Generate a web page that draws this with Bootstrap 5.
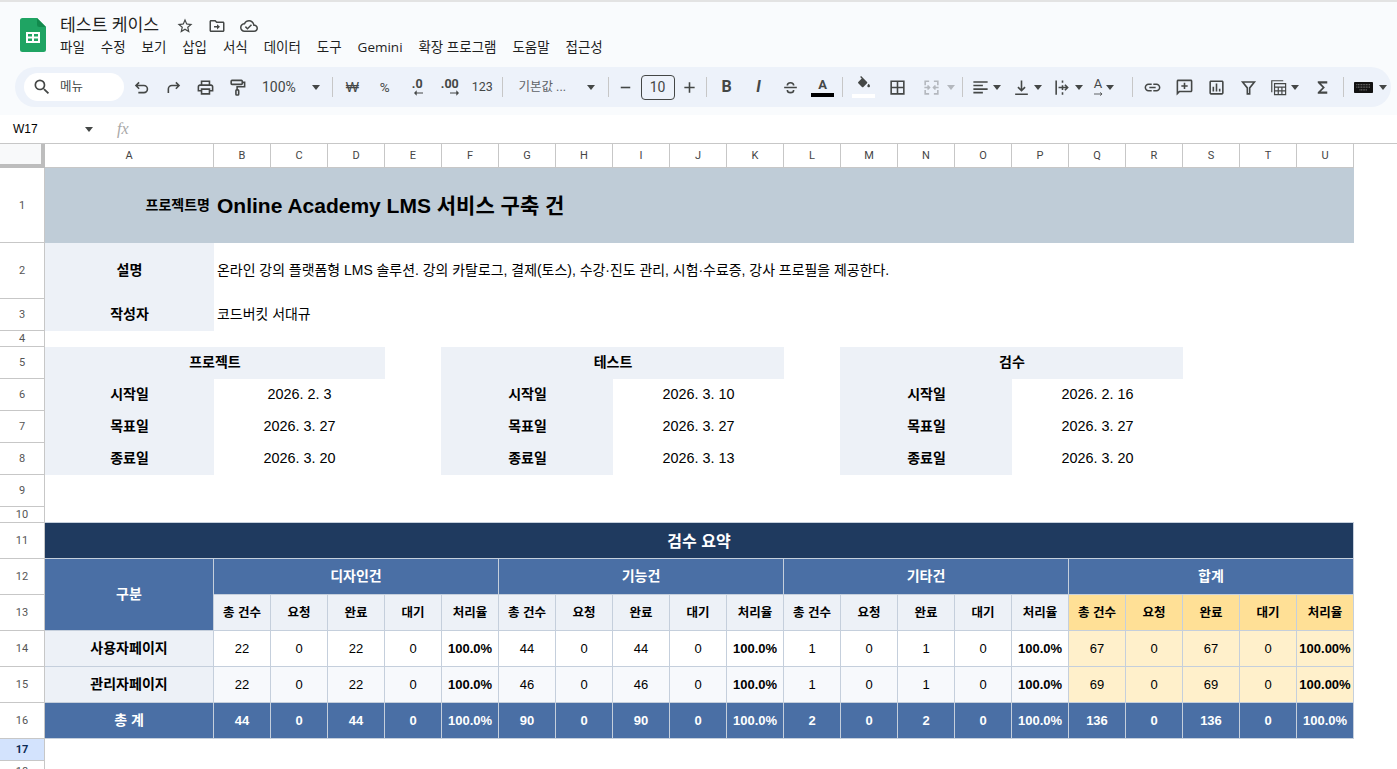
<!DOCTYPE html>
<html lang="ko">
<head>
    <meta charset="UTF-8">
    <meta name="viewport" content="width=device-width, initial-scale=1.0">
    <title>테스트 케이스</title>
    <link href="https://cdn.jsdelivr.net/npm/bootstrap@5.3.0/dist/css/bootstrap.min.css" rel="stylesheet">
    <style>
        html, body { height: 100%; overflow: hidden; }
        body { background: #fff; color: #000; font-family: "Liberation Sans", "Noto Sans CJK KR", sans-serif; }

        /* 상단 영역 */
        .app-top { height: 115px; background: #f9fbfd; border-top: 2px solid #e3e3e3; font-family: Roboto, "Noto Sans CJK KR", sans-serif; color: #1f1f1f; }
        .title-row { height: 65px; padding-left: 20px; }
        .doc-logo { flex: none; width: 26px; height: 34px; margin-top: 16px; }
        .doc-info { margin-left: 14px; padding-top: 11px; }
        .doc-name { font-size: 17.2px; line-height: 24px; width: 109px; }
        .doc-icon { width: 32px; text-align: center; }
        .doc-icon svg { width: 18px; height: 18px; fill: #444746; }
        .menu-list { font-family: "Open Sans", "Noto Sans CJK KR", sans-serif; font-size: 13.5px; line-height: 18px; margin-top: 1px; gap: 15.9px; }

        .tool-pill { height: 40px; margin: 0 6px 0 15px; padding-left: 9px; background: #edf2fa; border-radius: 20px; color: #444746; font-size: 13px; }
        .menu-search { flex: none; width: 100px; height: 28px; background: #fff; border-radius: 14px; padding-left: 8px; margin-right: 1px; gap: 8px; font-size: 12.5px; }
        .menu-search svg { width: 20px; height: 20px; fill: #444746; }
        .tb { width: 32px; height: 28px; flex: none; display: flex; align-items: center; justify-content: center; }
        .tb svg { flex: none; width: 19px; height: 19px; fill: #444746; }
        .tb-line svg { fill: none; stroke: #444746; stroke-width: 2; }
        .tb-n { width: 32.5px; font-size: 12.5px; }
        .tb-cur { font-family: "Liberation Sans", sans-serif; font-size: 14px; }
        .tb-pct { font-size: 13.5px; }
        .tb-step { width: 26px; }
        .tb-w { width: 34px; }
        .tb-drop { width: 41px; justify-content: flex-start; padding-left: 4px; }
        .tb-drop .arrow-down { margin-left: 3px; }
        .tb-drop-last { width: 39px; }
        .tb-kbd { width: 43px; padding-left: 6.5px; }
        .tb-kbd .arrow-down { margin-left: 6px; }
        .tb-merge { width: 44px; justify-content: flex-start; padding-left: 7px; }
        .tb-merge .arrow-down { margin-left: 6px; }
        .tb-select { justify-content: space-between; font-size: 14px; }
        .sel-zoom { width: 75px; padding: 0 8px 0 9px; }
        .sel-font { width: 98px; padding: 0 10px 0 12px; font-size: 12.5px; color: #5f6368; }
        .arrow-down { flex: none; width: 0; height: 0; border-left: 4.5px solid transparent; border-right: 4.5px solid transparent; border-top: 5px solid #444746; }
        .tb-sep { flex: none; width: 1px; height: 20px; background: #c7c7c7; margin: 0 3.5px; }
        .size-box { width: 34px; height: 25px; margin: 0 2px; border: 1px solid #444746; border-radius: 4px; font-size: 14px; text-align: center; line-height: 23px; flex: none; }
        .stack-glyph { display: flex; flex-direction: column; align-items: center; line-height: 1; font-weight: 700; }
        .stack-dec { align-items: flex-end; }
        .letter-a { font-size: 13px; line-height: 14px; }
        .color-bar { width: 23px; height: 4px; background: #000; margin-top: 1px; }
        .color-bar-white { background: #fff; margin-top: 2px; }
        .tb .small-arrow { width: 9px; height: 6px; }
        .tb .fill-icon { width: 16px; height: 16px; }
        .muted-icon svg { stroke: #b4b8be; }
        .muted-icon .arrow-down { border-top-color: #b4b8be; }

        /* 수식 입력줄 */
        .formula-bar { height: 29px; border-bottom: 1px solid #c7c7c7; padding-left: 13px; font-size: 12px; }
        .name-box { width: 80px; }
        .fx-mark { margin-left: 24px; width: 20px; font: italic 16px "Liberation Serif", serif; color: #a8a8a8; }

        /* 시트 */
        .sheet-grid { width: 1397px; table-layout: fixed; border-collapse: separate; border-spacing: 0; font-size: 14px; }
        .sheet-grid td, .sheet-grid th { padding: 0; white-space: nowrap; vertical-align: middle; }
        .col-rh { width: 45px; }
        .col-a { width: 169px; }
        .col-n { width: 57px; }
        .col-end { width: 43px; }
        .sheet-grid .col-head { font: 400 11px Roboto, sans-serif; color: #444; text-align: center; background: #fff; border-right: 1px solid #c7c7c7; border-bottom: 1px solid #c7c7c7; }
        .sheet-grid .col-corner { background: #f8f9fa; border-right: 4px solid #bdbdbd; border-bottom: 4px solid #bdbdbd; }
        .sheet-grid .col-tail { background: #fff; }
        .sheet-grid .rh { font: 400 11px Roboto, sans-serif; color: #555; text-align: center; background: #fff; border-right: 1px solid #c7c7c7; border-bottom: 1px solid #c7c7c7; }
        .sheet-grid .rh-on { background: #d3e3fd; font-weight: 700; color: #0b2a55; }

        .rw-head { height: 24px; }
        .rw-75 { height: 75px; }
        .rw-56 { height: 56px; }
        .rw-32 { height: 32px; }
        .rw-16 { height: 16px; }
        .rw-36 { height: 36px; }
        .rw-22 { height: 22px; }

        .sheet-grid .fill-slate { background: #bfccd7; }
        .sheet-grid .fill-pale { background: #edf1f7; }
        .sheet-grid .fill-over { box-shadow: -1px 0 0 #edf1f7; }
        .sheet-grid .label-cell { font-weight: 700; text-align: center; font-size: 14px; padding-bottom: 2px; }
        .sheet-grid .project-label { text-align: right; padding-right: 4px; font-weight: 700; font-size: 14px; }
        .sheet-grid .project-name { padding-left: 3px; font-weight: 700; font-size: 21px; }
        .sheet-grid .text-cell { padding: 0 0 2px 3px; font-size: 13.95px; }
        .sheet-grid .date-cell { text-align: center; font-size: 14.4px; }

        .sum-row td { border-right: 1px solid #c5cfdc; border-bottom: 1px solid #c5cfdc; text-align: center; font-size: 13px; }
        .sheet-grid .sum-edge { border-bottom: 1px solid #c5cfdc; }
        .sheet-grid .sum-row .fill-navy { background: #1f3a5f; color: #fff; font-weight: 700; font-size: 16px; padding-top: 2px; }
        .sum-row .fill-blue { background: #4a6fa5; color: #fff; font-weight: 700; }
        .sum-row .group-head { font-size: 14px; }
        .sheet-grid .sum-row .fill-sub { background: #edf1f7; font-weight: 700; font-size: 12.5px; padding-top: 2px; }
        .sheet-grid .sum-row .fill-gold { background: #ffe096; font-weight: 700; font-size: 12.5px; padding-top: 2px; }
        .sum-row .fill-cream { background: #fff0cb; }
        .sum-row .fill-alt { background: #f7f9fc; }
        .sheet-grid .sum-row .row-title { background: #edf1f7; font-weight: 700; font-size: 14px; }
        .sum-row .sum-title { font-size: 14px; }
        .sum-row .rate { font-weight: 700; font-size: 13px; }
        .sheet-grid .sum-row .rh { border-right: 1px solid #c7c7c7; border-bottom: 1px solid #c7c7c7; font-size: 11px; }
    </style>
</head>
<body>
    <div class="app-top">
        <div class="title-row d-flex">
            <svg class="doc-logo" viewBox="0 0 26 34">
                <path d="M2.500 0H17l9 9v22.500a2.500 2.500 0 0 1-2.500 2.500h-21A2.500 2.500 0 0 1 0 31.500v-29A2.500 2.500 0 0 1 2.500 0z" fill="#1fa463"/>
                <path d="M17 0l9 9h-6.500A2.500 2.500 0 0 1 17 6.500z" fill="#128a4d"/>
                <path d="M6 14h14v11H6z" fill="#fff"/>
                <path d="M8 16h4v2.500H8zM14 16h4v2.500h-4zM8 20.500h4V23H8zM14 20.500h4V23h-4z" fill="#1fa463"/>
            </svg>
            <div class="doc-info">
                <div class="d-flex align-items-center">
                    <div class="doc-name">테스트 케이스</div>
                    <div class="doc-icon"><svg viewBox="0 0 24 24"><path d="M22 9.240l-7.190-.620L12 2 9.190 8.630 2 9.240l5.460 4.730L5.820 21 12 17.270 18.180 21l-1.630-7.030L22 9.240zM12 15.400l-3.760 2.270 1-4.280-3.320-2.880 4.380-.380L12 6.100l1.710 4.040 4.380.380-3.320 2.880 1 4.280L12 15.400z"/></svg></div>
                    <div class="doc-icon"><svg viewBox="0 0 24 24"><path d="M20 6h-8l-2-2H4c-1.100 0-2 .9-2 2v12c0 1.100.9 2 2 2h16c1.100 0 2-.9 2-2V8c0-1.100-.9-2-2-2zm0 12H4V6h5.170l2 2H20v10z"/><path d="M8 12h4V9.500l4 3.500-4 3.500V14H8z"/></svg></div>
                    <div class="doc-icon"><svg viewBox="0 0 24 24"><path d="M19.350 10.040C18.670 6.590 15.640 4 12 4 9.110 4 6.600 5.640 5.350 8.040 2.340 8.360 0 10.910 0 14c0 3.310 2.690 6 6 6h13c2.760 0 5-2.240 5-5 0-2.640-2.050-4.780-4.650-4.960zM19 18H6c-2.210 0-4-1.790-4-4 0-2.050 1.530-3.760 3.560-3.970l1.070-.110.500-.950C8.080 7.140 9.940 6 12 6c2.620 0 4.880 1.860 5.390 4.430l.300 1.500 1.530.110c1.560.100 2.780 1.410 2.780 2.960 0 1.650-1.350 3-3 3zm-9-3.820l-2.090-2.090L6.500 13.500 10 17l6.010-6.010-1.410-1.410z"/></svg></div>
                </div>
                <div class="menu-list d-flex">
                    <span>파일</span><span>수정</span><span>보기</span><span>삽입</span><span>서식</span><span>데이터</span><span>도구</span><span>Gemini</span><span>확장 프로그램</span><span>도움말</span><span>접근성</span>
                </div>
            </div>
        </div>

        <div class="tool-pill d-flex align-items-center">
            <div class="menu-search d-flex align-items-center">
                <svg viewBox="0 0 24 24"><path d="M15.500 14h-.79l-.28-.27A6.471 6.471 0 0 0 16 9.500 6.500 6.500 0 1 0 9.500 16c1.610 0 3.090-.59 4.230-1.570l.27.280v.79l5 4.990L20.490 19l-4.990-5zm-6 0C7.010 14 5 11.990 5 9.500S7.010 5 9.500 5 14 7.010 14 9.500 11.990 14 9.500 14z"/></svg>
                <span>메뉴</span>
            </div>
            <div class="tb tb-line"><svg viewBox="0 0 24 24"><path d="M9 5.500L5 9.500l4 4M5.500 9.500H15a4.500 4.500 0 0 1 0 9H8"/></svg></div>
            <div class="tb tb-line"><svg viewBox="0 0 24 24"><path d="M15 5.500l4 4-4 4M18.500 9.500H10a4.500 4.500 0 0 0-4.500 4.500V19"/></svg></div>
            <div class="tb"><svg viewBox="0 0 24 24"><path d="M19 8h-1V3H6v5H5c-1.660 0-3 1.340-3 3v6h4v4h12v-4h4v-6c0-1.660-1.340-3-3-3zM8 5h8v3H8V5zm8 12v2H8v-4h8v2zm2-2v-2H6v2H4v-4c0-.55.45-1 1-1h14c.55 0 1 .45 1 1v4h-2z"/></svg></div>
            <div class="tb tb-line"><svg viewBox="0 0 24 24"><rect x="4" y="3" width="14" height="5" rx="1"/><path d="M18 5.500h3V11H11.500v3.500"/><rect x="10" y="15" width="3.500" height="6.500" rx="1"/></svg></div>
            <div class="tb tb-select sel-zoom"><span>100%</span><span class="arrow-down"></span></div>
            <div class="tb-sep"></div>
            <div class="tb tb-n tb-cur">₩</div>
            <div class="tb tb-n tb-pct">%</div>
            <div class="tb tb-n"><div class="stack-glyph stack-dec"><span>.0</span><svg class="small-arrow" viewBox="0 0 10 6"><path d="M10 2.500H3V0L0 3l3 3V3.500h7z"/></svg></div></div>
            <div class="tb tb-n"><div class="stack-glyph stack-dec"><span>.00</span><svg class="small-arrow" viewBox="0 0 10 6"><path d="M0 2.500h7V0l3 3-3 3V3.500H0z"/></svg></div></div>
            <div class="tb tb-n">123</div>
            <div class="tb-sep"></div>
            <div class="tb tb-select sel-font"><span>기본값 ...</span><span class="arrow-down"></span></div>
            <div class="tb-sep"></div>
            <div class="tb tb-step tb-line"><svg viewBox="0 0 24 24"><path d="M6 12h12"/></svg></div>
            <div class="size-box">10</div>
            <div class="tb tb-step tb-line"><svg viewBox="0 0 24 24"><path d="M5.500 12h13M12 5.500v13"/></svg></div>
            <div class="tb-sep"></div>
            <div class="tb fw-bold fs-6">B</div>
            <div class="tb fw-bold fst-italic fs-6">I</div>
            <div class="tb tb-line"><svg viewBox="0 0 24 24"><path d="M8 9.500a4 3.500 0 0 1 8 0M4 12h16M8 15a4 3.500 0 0 0 8 0"/></svg></div>
            <div class="tb"><div class="stack-glyph"><span class="letter-a">A</span><span class="color-bar"></span></div></div>
            <div class="tb-sep"></div>
            <div class="tb tb-w"><div class="stack-glyph"><svg class="fill-icon" viewBox="0 0 24 24"><path d="M16.560 8.940L7.620 0 6.210 1.410l2.380 2.380-5.150 5.150c-.59.590-.59 1.540 0 2.120l5.500 5.500c.29.290.68.440 1.060.440s.77-.15 1.060-.44l5.500-5.500c.59-.58.59-1.530 0-2.120zM19 11.500s-2 2.170-2 3.500c0 1.100.9 2 2 2s2-.9 2-2c0-1.330-2-3.500-2-3.500z"/></svg><span class="color-bar color-bar-white"></span></div></div>
            <div class="tb tb-w tb-line"><svg viewBox="0 0 24 24"><path d="M4 4h16v16H4zM12 4v16M4 12h16"/></svg></div>
            <div class="tb tb-merge muted-icon tb-line"><svg viewBox="0 0 24 24"><path d="M4 9V4h5M15 4h5v5M4 15v5h5M15 20h5v-5M3 12h6M21 12h-6M7 9.500l2.500 2.500L7 14.500M17 9.500L14.500 12l2.500 2.500"/></svg><span class="arrow-down"></span></div>
            <div class="tb-sep"></div>
            <div class="tb tb-drop tb-line"><svg viewBox="0 0 24 24"><path d="M3 5h18M3 9.500h12M3 14h18M3 18.500h12"/></svg><span class="arrow-down"></span></div>
            <div class="tb tb-drop tb-line"><svg viewBox="0 0 24 24"><path d="M4 20.500h16M12 3v13M7.500 11.500L12 16l4.500-4.500"/></svg><span class="arrow-down"></span></div>
            <div class="tb tb-drop tb-line"><svg viewBox="0 0 24 24"><path d="M4 3v18M12 3v3M12 9v6M12 18v3M7 12h11M15 8.500l3.500 3.500-3.500 3.500"/></svg><span class="arrow-down"></span></div>
            <div class="tb tb-drop tb-drop-last tb-line"><div class="stack-glyph"><span class="letter-a fw-normal">A</span><svg class="small-arrow" viewBox="0 0 14 6"><path d="M0 3h12M9.500.5L12.500 3l-3 2.500" stroke-width="1.300"/></svg></div><span class="arrow-down"></span></div>
            <div class="tb-sep"></div>
            <div class="tb"><svg viewBox="0 0 24 24"><path d="M3.900 12c0-1.710 1.390-3.100 3.100-3.100h4V7H7c-2.760 0-5 2.240-5 5s2.240 5 5 5h4v-1.900H7c-1.710 0-3.100-1.390-3.100-3.100zM8 13h8v-2H8v2zm9-6h-4v1.900h4c1.710 0 3.100 1.390 3.100 3.100s-1.390 3.100-3.100 3.100h-4V17h4c2.760 0 5-2.240 5-5s-2.240-5-5-5z"/></svg></div>
            <div class="tb"><svg viewBox="0 0 24 24"><path d="M20 2H4c-1.100 0-2 .9-2 2v18l4-4h14c1.100 0 2-.9 2-2V4c0-1.100-.9-2-2-2zm0 14H5.170L4 17.170V4h16v12z"/><path d="M11 6h2v3h3v2h-3v3h-2v-3H8V9h3z"/></svg></div>
            <div class="tb"><svg viewBox="0 0 24 24"><path d="M19 3H5c-1.100 0-2 .9-2 2v14c0 1.100.9 2 2 2h14c1.100 0 2-.9 2-2V5c0-1.100-.9-2-2-2zm0 16H5V5h14v14z"/><path d="M7 11h2v6H7zM11 7h2v10h-2zM15 13.500h2V17h-2z"/></svg></div>
            <div class="tb tb-line"><svg viewBox="0 0 24 24"><path d="M4.500 5h15l-6 7.500V20h-3v-7.500z"/></svg></div>
            <div class="tb tb-drop tb-line"><svg viewBox="0 0 24 24"><path d="M3.500 18V3.500H18" stroke-width="1.500"/><path d="M7 7h14v14H7zM7 11.500h14M7 16.300h14M11.700 11.500V21M16.300 11.500V21" stroke-width="1.500"/></svg><span class="arrow-down"></span></div>
            <div class="tb tb-w"><svg viewBox="0 0 24 24"><path d="M6 4h12v3h-8l5 5-5 5h8v3H6v-2l6-6-6-6z"/></svg></div>
            <div class="tb-sep"></div>
            <div class="tb tb-drop tb-kbd"><svg viewBox="0 0 24 16"><rect x="0" y="1" width="24" height="14" rx="1" fill="#111"/><path d="M3 4.500h18M3 7.500h18M7 11h10" stroke="#8f8f8f" stroke-width="1.200" stroke-dasharray="1.200 .8"/></svg><span class="arrow-down"></span></div>
        </div>
    </div>

    <div class="formula-bar d-flex align-items-center">
        <div class="name-box d-flex align-items-center justify-content-between">W17 <span class="arrow-down"></span></div>
        <div class="fx-mark">fx</div>
    </div>

    <table class="sheet-grid">
        <colgroup>
            <col class="col-rh"><col class="col-a">
            <col class="col-n"><col class="col-n"><col class="col-n"><col class="col-n"><col class="col-n">
            <col class="col-n"><col class="col-n"><col class="col-n"><col class="col-n"><col class="col-n">
            <col class="col-n"><col class="col-n"><col class="col-n"><col class="col-n"><col class="col-n">
            <col class="col-n"><col class="col-n"><col class="col-n"><col class="col-n"><col class="col-n">
            <col class="col-end">
        </colgroup>
        <tr class="rw-head">
            <th class="col-corner"></th>
            <th class="col-head">A</th><th class="col-head">B</th><th class="col-head">C</th><th class="col-head">D</th><th class="col-head">E</th><th class="col-head">F</th><th class="col-head">G</th><th class="col-head">H</th><th class="col-head">I</th><th class="col-head">J</th><th class="col-head">K</th><th class="col-head">L</th><th class="col-head">M</th><th class="col-head">N</th><th class="col-head">O</th><th class="col-head">P</th><th class="col-head">Q</th><th class="col-head">R</th><th class="col-head">S</th><th class="col-head">T</th><th class="col-head">U</th>
            <th class="col-tail"></th>
        </tr>
        <tr class="rw-75">
            <td class="rh">1</td>
            <td class="fill-slate project-label">프로젝트명</td>
            <td class="fill-slate project-name" colspan="20">Online Academy LMS 서비스 구축 건</td>
        </tr>
        <tr class="rw-56">
            <td class="rh">2</td>
            <td class="fill-pale label-cell">설명</td>
            <td class="text-cell" colspan="20">온라인 강의 플랫폼형 LMS 솔루션. 강의 카탈로그, 결제(토스), 수강·진도 관리, 시험·수료증, 강사 프로필을 제공한다.</td>
        </tr>
        <tr class="rw-32">
            <td class="rh">3</td>
            <td class="fill-pale label-cell">작성자</td>
            <td class="text-cell" colspan="20">코드버킷 서대규</td>
        </tr>
        <tr class="rw-16"><td class="rh">4</td><td colspan="21"></td></tr>
        <tr class="rw-32">
            <td class="rh">5</td>
            <td class="fill-pale label-cell" colspan="4">프로젝트</td><td></td>
            <td class="fill-pale fill-over label-cell" colspan="6">테스트</td><td></td>
            <td class="fill-pale fill-over label-cell" colspan="6">검수</td><td colspan="3"></td>
        </tr>
        <tr class="rw-32">
            <td class="rh">6</td>
            <td class="fill-pale label-cell">시작일</td><td class="date-cell" colspan="3">2026. 2. 3</td><td></td>
            <td class="fill-pale fill-over label-cell" colspan="3">시작일</td><td class="date-cell" colspan="3">2026. 3. 10</td><td></td>
            <td class="fill-pale fill-over label-cell" colspan="3">시작일</td><td class="date-cell" colspan="3">2026. 2. 16</td><td colspan="3"></td>
        </tr>
        <tr class="rw-32">
            <td class="rh">7</td>
            <td class="fill-pale label-cell">목표일</td><td class="date-cell" colspan="3">2026. 3. 27</td><td></td>
            <td class="fill-pale fill-over label-cell" colspan="3">목표일</td><td class="date-cell" colspan="3">2026. 3. 27</td><td></td>
            <td class="fill-pale fill-over label-cell" colspan="3">목표일</td><td class="date-cell" colspan="3">2026. 3. 27</td><td colspan="3"></td>
        </tr>
        <tr class="rw-32">
            <td class="rh">8</td>
            <td class="fill-pale label-cell">종료일</td><td class="date-cell" colspan="3">2026. 3. 20</td><td></td>
            <td class="fill-pale fill-over label-cell" colspan="3">종료일</td><td class="date-cell" colspan="3">2026. 3. 13</td><td></td>
            <td class="fill-pale fill-over label-cell" colspan="3">종료일</td><td class="date-cell" colspan="3">2026. 3. 20</td><td colspan="3"></td>
        </tr>
        <tr class="rw-32"><td class="rh">9</td><td colspan="21"></td></tr>
        <tr class="rw-16"><td class="rh">10</td><td class="sum-edge" colspan="21"></td></tr>
        <tr class="rw-36 sum-row">
            <td class="rh">11</td>
            <td class="fill-navy" colspan="21">검수 요약</td>
        </tr>
        <tr class="rw-36 sum-row">
            <td class="rh">12</td>
            <td class="fill-blue group-head" rowspan="2">구분</td>
            <td class="fill-blue group-head" colspan="5">디자인건</td>
            <td class="fill-blue group-head" colspan="5">기능건</td>
            <td class="fill-blue group-head" colspan="5">기타건</td>
            <td class="fill-blue group-head" colspan="5">합계</td>
        </tr>
        <tr class="rw-36 sum-row">
            <td class="rh">13</td>
            <td class="fill-sub">총 건수</td><td class="fill-sub">요청</td><td class="fill-sub">완료</td><td class="fill-sub">대기</td><td class="fill-sub">처리율</td>
            <td class="fill-sub">총 건수</td><td class="fill-sub">요청</td><td class="fill-sub">완료</td><td class="fill-sub">대기</td><td class="fill-sub">처리율</td>
            <td class="fill-sub">총 건수</td><td class="fill-sub">요청</td><td class="fill-sub">완료</td><td class="fill-sub">대기</td><td class="fill-sub">처리율</td>
            <td class="fill-gold">총 건수</td><td class="fill-gold">요청</td><td class="fill-gold">완료</td><td class="fill-gold">대기</td><td class="fill-gold">처리율</td>
        </tr>
        <tr class="rw-36 sum-row">
            <td class="rh">14</td>
            <td class="row-title">사용자페이지</td>
            <td>22</td><td>0</td><td>22</td><td>0</td><td class="rate">100.0%</td>
            <td>44</td><td>0</td><td>44</td><td>0</td><td class="rate">100.0%</td>
            <td>1</td><td>0</td><td>1</td><td>0</td><td class="rate">100.0%</td>
            <td class="fill-cream">67</td><td class="fill-cream">0</td><td class="fill-cream">67</td><td class="fill-cream">0</td><td class="fill-cream rate">100.00%</td>
        </tr>
        <tr class="rw-36 sum-row">
            <td class="rh">15</td>
            <td class="row-title">관리자페이지</td>
            <td class="fill-alt">22</td><td class="fill-alt">0</td><td class="fill-alt">22</td><td class="fill-alt">0</td><td class="fill-alt rate">100.0%</td>
            <td class="fill-alt">46</td><td class="fill-alt">0</td><td class="fill-alt">46</td><td class="fill-alt">0</td><td class="fill-alt rate">100.0%</td>
            <td class="fill-alt">1</td><td class="fill-alt">0</td><td class="fill-alt">1</td><td class="fill-alt">0</td><td class="fill-alt rate">100.0%</td>
            <td class="fill-cream">69</td><td class="fill-cream">0</td><td class="fill-cream">69</td><td class="fill-cream">0</td><td class="fill-cream rate">100.00%</td>
        </tr>
        <tr class="rw-36 sum-row">
            <td class="rh">16</td>
            <td class="fill-blue sum-title">총 계</td>
            <td class="fill-blue">44</td><td class="fill-blue">0</td><td class="fill-blue">44</td><td class="fill-blue">0</td><td class="fill-blue rate">100.0%</td>
            <td class="fill-blue">90</td><td class="fill-blue">0</td><td class="fill-blue">90</td><td class="fill-blue">0</td><td class="fill-blue rate">100.0%</td>
            <td class="fill-blue">2</td><td class="fill-blue">0</td><td class="fill-blue">2</td><td class="fill-blue">0</td><td class="fill-blue rate">100.0%</td>
            <td class="fill-blue">136</td><td class="fill-blue">0</td><td class="fill-blue">136</td><td class="fill-blue">0</td><td class="fill-blue rate">100.0%</td>
        </tr>
        <tr class="rw-22"><td class="rh rh-on">17</td><td colspan="21"></td></tr>
        <tr class="rw-22"><td class="rh">18</td><td colspan="21"></td></tr>
    </table>

    <script src="https://cdn.jsdelivr.net/npm/bootstrap@5.3.0/dist/js/bootstrap.bundle.min.js"></script>
</body>
</html>
